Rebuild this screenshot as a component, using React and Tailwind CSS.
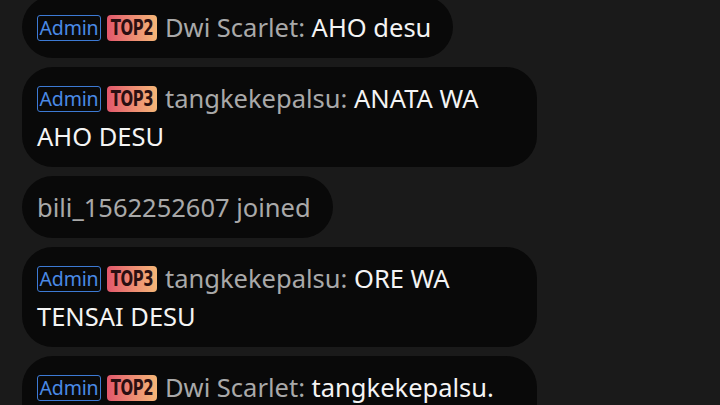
import React from "react";

function AdminBadge() {
  return (
    <span className="inline-flex items-center justify-center h-[26px] w-[64px] border-[1.5px] border-[#3d7ad4] rounded-[3px] text-[#4a8ae6] text-[19.5px] leading-none align-middle mr-[6px] relative top-[-2px] tracking-[-0.2px]">
      Admin
    </span>
  );
}

function TopBadge({ n }) {
  return (
    <span
      className="inline-flex items-center justify-center h-[26px] w-[50px] rounded-[4px] bg-linear-to-r from-[#e2566c] to-[#f4b677] text-[#2a0f12] text-[18px] font-bold leading-none align-middle mr-[8px] relative top-[-2px] tracking-[-0.5px]"
      style={{ fontFamily: '"DejaVu Sans Condensed", "DejaVu Sans", sans-serif' }}
    >
      <span className="inline-block scale-y-[1.2] scale-x-[0.92]">TOP{n}</span>
    </span>
  );
}

function Bubble({ children }) {
  return (
    <div className="max-w-[515px] w-fit bg-[#090909] rounded-[31px] pl-[15px] pr-[22px] py-[12px] text-[25.5px] leading-[38px]">
      {children}
    </div>
  );
}

function Msg({ top, name, text }) {
  return (
    <Bubble>
      <AdminBadge />
      <TopBadge n={top} />
      <span className="text-[#a9a9a9]">{name}: </span>
      <span className="text-[#f4f4f4]">{text}</span>
    </Bubble>
  );
}

export default function App() {
  return (
    <div
      className="w-[720px] h-[405px] overflow-hidden bg-[#1a1a1a]"
      style={{ fontFamily: '"Noto Sans", "Open Sans", sans-serif' }}
    >
      <div className="flex flex-col items-start gap-[9px] px-[22px] mt-[-4px]">
        <Msg top={2} name="Dwi Scarlet" text="AHO desu" />
        <Msg top={3} name="tangkekepalsu" text="ANATA WA AHO DESU" />
        <Bubble>
          <span className="text-[#a9a9a9]">bili_1562252607 joined</span>
        </Bubble>
        <Msg top={3} name="tangkekepalsu" text="ORE WA TENSAI DESU" />
        <Msg top={2} name="Dwi Scarlet" text="tangkekepalsu. ANATA WA" />
      </div>
    </div>
  );
}
